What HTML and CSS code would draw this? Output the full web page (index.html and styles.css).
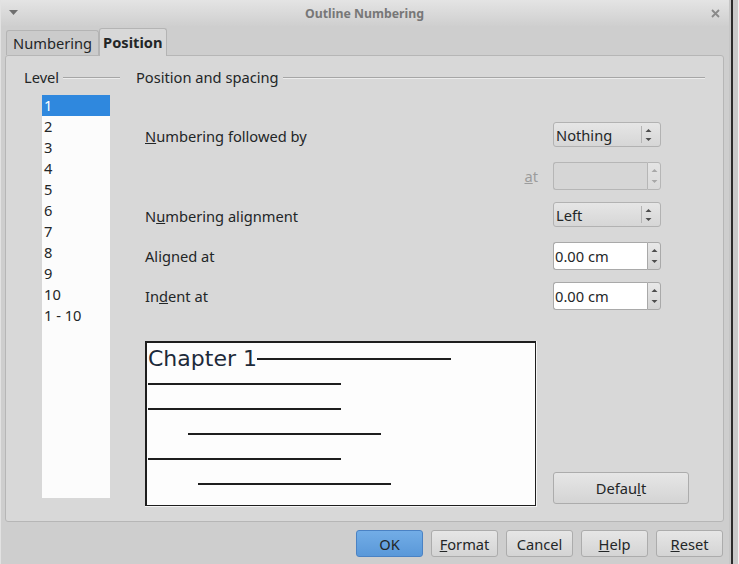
FILE: index.html
```html
<!DOCTYPE html>
<html lang="en">
<head>
    <meta charset="UTF-8">
    <meta name="viewport" content="width=device-width, initial-scale=1.0">
    <title>Outline Numbering</title>
    <link rel="stylesheet" href="styles.css">
</head>
<body>
    <div class="dialog">
        <div class="titlebar">
            <svg class="menu-arrow" width="9" height="6" viewBox="0 0 9 6"><polygon points="0,0 9,0 4.5,5" fill="#6f6f6f"/></svg>
            <span class="title">Outline Numbering</span>
            <svg class="close" width="9" height="9" viewBox="0 0 9 9"><path d="M1 1 L8 8 M8 1 L1 8" stroke="#8a8a8a" stroke-width="1.8"/></svg>
        </div>

        <div class="tabs">
            <div class="tab">Numbering</div>
            <div class="tab active">Position</div>
        </div>

        <div class="panel">
            <div class="level-col">
                <div class="group-head"><span>Level</span></div>
                <ul class="level-list">
                    <li class="selected">1</li>
                    <li>2</li>
                    <li>3</li>
                    <li>4</li>
                    <li>5</li>
                    <li>6</li>
                    <li>7</li>
                    <li>8</li>
                    <li>9</li>
                    <li>10</li>
                    <li>1 - 10</li>
                </ul>
            </div>

            <div class="pos-col">
                <div class="group-head"><span>Position and spacing</span></div>

                <div class="form">
                    <label class="field-label"><u>N</u>umbering followed by</label>
                    <div class="combo">
                        <span class="combo-text">Nothing</span>
                        <span class="combo-sep"></span>
                        <svg class="arrows" width="7" height="14" viewBox="0 0 7 14"><polygon points="0.5,4 3.5,1 6.5,4" fill="#4d4d4d"/><polygon points="0.5,10 3.5,13 6.5,10" fill="#4d4d4d"/></svg>
                    </div>

                    <label class="field-label at"><u>a</u>t</label>
                    <div class="spin disabled">
                        <span class="spin-field"></span>
                        <span class="spin-btn">
                            <svg width="7" height="16" viewBox="0 0 7 16"><polygon points="0.5,4 3.5,1 6.5,4" fill="#a8a8a8"/><polygon points="0.5,12 3.5,15 6.5,12" fill="#a8a8a8"/></svg>
                        </span>
                    </div>

                    <label class="field-label">N<u>u</u>mbering alignment</label>
                    <div class="combo">
                        <span class="combo-text">Left</span>
                        <span class="combo-sep"></span>
                        <svg class="arrows" width="7" height="14" viewBox="0 0 7 14"><polygon points="0.5,4 3.5,1 6.5,4" fill="#4d4d4d"/><polygon points="0.5,10 3.5,13 6.5,10" fill="#4d4d4d"/></svg>
                    </div>

                    <label class="field-label">Ali<u>g</u>ned at</label>
                    <div class="spin">
                        <span class="spin-field">0.00 cm</span>
                        <span class="spin-btn">
                            <svg width="7" height="16" viewBox="0 0 7 16"><polygon points="0.5,4 3.5,1 6.5,4" fill="#4d4d4d"/><polygon points="0.5,12 3.5,15 6.5,12" fill="#4d4d4d"/></svg>
                        </span>
                    </div>

                    <label class="field-label">In<u>d</u>ent at</label>
                    <div class="spin">
                        <span class="spin-field">0.00 cm</span>
                        <span class="spin-btn">
                            <svg width="7" height="16" viewBox="0 0 7 16"><polygon points="0.5,4 3.5,1 6.5,4" fill="#4d4d4d"/><polygon points="0.5,12 3.5,15 6.5,12" fill="#4d4d4d"/></svg>
                        </span>
                    </div>
                </div>

                <div class="bottom">
                    <div class="preview">
                        <div class="preview-inner">
                            <div class="chapter-row">
                                <span class="chapter">Chapter 1</span>
                                <span class="rule chapter-rule"></span>
                            </div>
                            <div class="rule line first"></div>
                            <div class="rule line"></div>
                            <div class="rule line indent-1"></div>
                            <div class="rule line"></div>
                            <div class="rule line indent-2"></div>
                        </div>
                    </div>
                    <button class="btn default">Defau<u>l</u>t</button>
                </div>
            </div>
        </div>

        <div class="buttons">
            <button class="btn ok">OK</button>
            <button class="btn"><u>F</u>ormat</button>
            <button class="btn">Cancel</button>
            <button class="btn"><u>H</u>elp</button>
            <button class="btn"><u>R</u>eset</button>
        </div>
    </div>
    <div class="behind"></div>
</body>
</html>
```

FILE: styles.css
```css
* {
    box-sizing: border-box;
}

body {
    margin: 0;
    width: 739px;
    height: 564px;
    overflow: hidden;
    display: flex;
    background-color: #c6c6c6;
    font-family: "Noto Sans", "Open Sans", sans-serif;
    font-size: 11pt;
    color: #232627;
}

.dialog {
    width: 729px;
    height: 564px;
    display: flex;
    flex-direction: column;
    background-color: #cecece;
    border-left: 1px solid #e2e2e2;
}

.behind {
    flex: 1;
    margin-left: 2px;
    border-left: 2px solid #2b2b2b;
    border-right: 1px solid #f2f2f2;
    background-color: #c9c9c9;
}

/* title bar */
.titlebar {
    height: 26px;
    display: flex;
    align-items: center;
    padding: 0 9px 0 8px;
    background: linear-gradient(#e4e4e4, #cfcfcf);
}

.title {
    flex: 1;
    text-align: center;
    font-size: 12.3px;
    font-weight: bold;
    color: #777;
}

/* tabs */
.tabs {
    height: 29px;
    display: flex;
    align-items: flex-end;
    padding-left: 5px;
}

.tab {
    height: 25px;
    padding: 0 6px;
    line-height: 24px;
    border: 1px solid #b4b4b4;
    border-bottom: none;
    border-radius: 3px 3px 0 0;
    background-color: #cbcbcb;
}

.tab.active {
    height: 28px;
    margin-bottom: -1px;
    padding: 0 3px;
    line-height: 27px;
    font-weight: bold;
    background-color: #d8d8d8;
    position: relative;
}

/* main panel */
.panel {
    height: 467px;
    margin: 0 5px 0 4px;
    padding: 11px 18px 14px 18px;
    display: flex;
    border: 1px solid #b6b6b6;
    border-radius: 3px;
    background-color: #d8d8d8;
}

.group-head {
    height: 20px;
    display: flex;
    align-items: center;
    gap: 4px;
    line-height: 20px;
}

.group-head::after {
    content: "";
    flex: 1;
    height: 1px;
    background-color: #a6a6a6;
    box-shadow: 0 1px 0 #ececec;
}

.level-col {
    width: 96px;
}

.level-list {
    list-style: none;
    margin: 8px 0 0 18px;
    padding: 0;
    width: 68px;
    height: 403px;
    background-color: #fcfcfc;
}

.level-list li {
    height: 21px;
    line-height: 21px;
    padding-left: 2px;
}

.level-list li.selected {
    background-color: #2f88de;
    color: #fff;
}

.pos-col {
    margin-left: 16px;
    width: 569px;
}

.form {
    width: 525px;
    margin-top: 29px;
    display: grid;
    grid-template-columns: 1fr 108px;
    grid-auto-rows: 40px;
    align-items: center;
}

.field-label {
    padding-left: 9px;
}

.field-label.at {
    justify-self: end;
    padding-right: 15px;
    color: #9c9c9c;
}

/* combo boxes */
.combo {
    height: 25px;
    margin-bottom: 3px;
    display: flex;
    align-items: center;
    padding-left: 2px;
    border: 1px solid #b2b2b2;
    border-radius: 3px;
    background: linear-gradient(#e6e6e6, #d6d6d6);
}

.combo-text {
    flex: 1;
}

.combo-sep {
    width: 1px;
    height: 17px;
    background-color: #b4b4b4;
}

.combo .arrows {
    margin: 0 8px 0 3px;
}

/* spin boxes */
.spin {
    height: 28px;
    display: flex;
}

.spin-field {
    width: 94px;
    padding-left: 1px;
    line-height: 26px;
    background-color: #fff;
    border: 1px solid #a9a9a9;
    border-right: none;
    border-radius: 3px 0 0 3px;
}

.spin-btn {
    flex: 1;
    display: flex;
    align-items: center;
    justify-content: center;
    border: 1px solid #a9a9a9;
    border-radius: 0 3px 3px 0;
    background: linear-gradient(#e8e8e8, #d4d4d4);
}

.spin.disabled .spin-field {
    background-color: #d6d6d6;
    border-color: #b6b6b6;
}

.spin.disabled .spin-btn {
    border-color: #b6b6b6;
    background: linear-gradient(#e4e4e4, #dadada);
}

/* preview and default */
.bottom {
    margin-top: 25px;
    display: flex;
    align-items: flex-end;
}

.preview {
    width: 392px;
    height: 166px;
    margin-left: 9px;
    border: 1px solid #f4f4f4;
    border-left: none;
    border-top: none;
}

.preview-inner {
    height: 100%;
    border-left: 2px solid #1e1e1e;
    border-top: 2px solid #1e1e1e;
    border-right: 1px solid #1e1e1e;
    border-bottom: 1px solid #1e1e1e;
    background-color: #fdfdfd;
    padding-left: 1px;
}

.chapter-row {
    height: 28px;
    padding-top: 4px;
    display: flex;
    align-items: flex-start;
}

.chapter {
    font-family: "DejaVu Sans", sans-serif;
    font-size: 22px;
    line-height: 24px;
    color: #1d2a3a;
}

.rule {
    display: block;
    height: 2px;
    width: 193px;
    background-color: #1e1e1e;
}

.chapter-rule {
    width: 194px;
    margin-top: 11px;
}

.line {
    margin-top: 23px;
}

.line.first {
    margin-top: 12px;
}

.line.indent-1 {
    margin-left: 40px;
}

.line.indent-2 {
    margin-left: 50px;
}

/* buttons */
.btn {
    font-family: inherit;
    font-size: 11pt;
    color: #232627;
    padding: 0;
    border: 1px solid #acacac;
    border-radius: 3px;
    background: linear-gradient(#e6e6e6, #d4d4d4);
}

.default {
    width: 136px;
    height: 32px;
    margin: 0 0 3px 16px;
}

.buttons {
    flex: 1;
    display: flex;
    justify-content: flex-end;
    gap: 8px;
    padding: 8px 6px 0 0;
}

.buttons .btn {
    width: 67px;
    height: 27px;
}

.buttons .ok {
    border-color: #4a82c4;
    background: linear-gradient(#72ade6, #5a98d9);
}
```
